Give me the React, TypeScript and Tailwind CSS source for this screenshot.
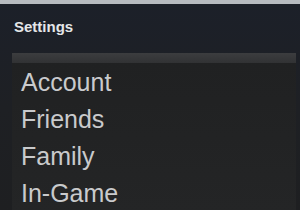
const items = ["Account", "Friends", "Family", "In-Game"];

export default function App() {
  return (
    <div
      className="w-[300px] h-[210px] overflow-hidden flex flex-col border-t-4 border-[#b7bbc0] bg-gradient-to-b from-[#1c2029] via-[#1e2024] to-[#1e1f21]"
      style={{ fontFamily: '"Liberation Sans", Arial, sans-serif' }}
    >
      <div className="h-[49px] shrink-0 pl-[14px] pt-[12px] text-[15px] font-bold text-[#e4e6e8]">
        Settings
      </div>
      <div className="flex-1 min-h-0 ml-3 mr-[4px] flex flex-col">
        <div className="h-[10px] shrink-0 bg-gradient-to-b from-[#3c3d3f] to-[#313234]" />
        <ul className="flex-1 bg-gradient-to-b from-[#202122] to-[#242526] pl-[9px] pt-[1px]">
          {items.map((item) => (
            <li
              key={item}
              className="h-[37px] leading-[37px] text-[25px] text-[#c9cacc]"
            >
              {item}
            </li>
          ))}
        </ul>
      </div>
    </div>
  );
}
